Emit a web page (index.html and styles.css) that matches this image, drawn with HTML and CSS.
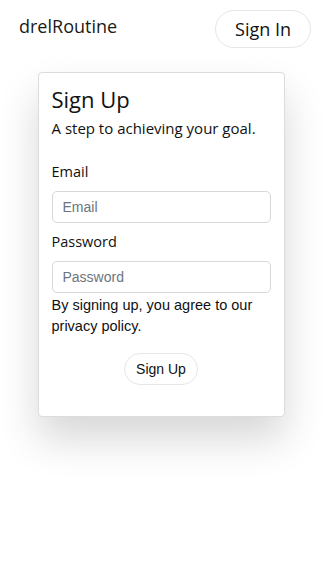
FILE: index.html
```html
<!DOCTYPE html>
<html>
<head>
<meta charset="utf-8">
<link rel="stylesheet" href="styles.css">
</head>
<body>
<header class="topbar">
  <div class="brand">drelRoutine</div>
  <button class="btn-pill btn-signin">Sign In</button>
</header>
<main class="main">
  <div class="card">
    <h1 class="title">Sign Up</h1>
    <p class="subtitle">A step to achieving your goal.</p>
    <form class="form">
      <label class="label" for="email">Email</label>
      <input class="input" id="email" type="email" placeholder="Email">
      <label class="label" for="password">Password</label>
      <input class="input" id="password" type="password" placeholder="Password">
      <p class="note">By signing up, you agree to our privacy policy.</p>
      <div class="actions">
        <button type="button" class="btn-pill btn-signup">Sign Up</button>
      </div>
    </form>
  </div>
</main>
</body>
</html>
```
FILE: styles.css
```css
* { box-sizing: border-box; }
html, body { margin: 0; padding: 0; background: #fff; }
body {
  font-family: "Open Sans", "Noto Sans", sans-serif;
  color: #111;
  width: 322px;
  height: 573px;
  overflow: hidden;
}
.topbar {
  display: flex;
  justify-content: space-between;
  align-items: flex-start;
  padding: 10px 11px 0 19px;
}
.brand {
  font-size: 18px;
  line-height: 20px;
  margin-top: 6px;
  color: #1a1a1a;
}
.btn-pill {
  background: #fff;
  border: 1px solid #e6e6e6;
  border-radius: 999px;
  color: #111;
  cursor: pointer;
}
.btn-signin {
  width: 96px;
  height: 38px;
  font-family: "Open Sans", sans-serif;
  font-size: 18px;
  padding: 0;
}
.main {
  display: flex;
  justify-content: center;
  padding-top: 24px;
}
.card {
  width: 247px;
  border: 1px solid #dcdcdc;
  border-radius: 4px;
  background: #fff;
  box-shadow: 0 22px 40px rgba(0,0,0,0.16);
  padding: 12px 13px 31px 13px;
}
.title {
  font-weight: 400;
  font-size: 22px;
  line-height: 28px;
  margin: 0;
}
.subtitle {
  font-size: 15px;
  line-height: 20px;
  margin: 5px 0 0;
}
.form {
  display: flex;
  flex-direction: column;
  margin-top: 24px;
}
.label {
  font-size: 14.5px;
  line-height: 20px;
  margin-bottom: 9px;
}
.input {
  height: 32px;
  width: 100%;
  border: 1px solid #d8d8d8;
  border-radius: 5px;
  padding: 0 10px;
  font-family: "Liberation Sans", Arial, sans-serif;
  font-size: 14px;
  color: #333;
  margin-bottom: 9px;
}
.input::placeholder { color: #6c757d; }
.note {
  font-family: "Liberation Sans", Arial, sans-serif;
  font-size: 14.5px;
  line-height: 21px;
  margin: -7px 0 0;
}
.actions {
  display: flex;
  justify-content: center;
  margin-top: 16px;
}
.btn-signup {
  font-family: "Liberation Sans", Arial, sans-serif;
  font-size: 14px;
  height: 32px;
  width: 74px;
  padding: 0;
}
```
